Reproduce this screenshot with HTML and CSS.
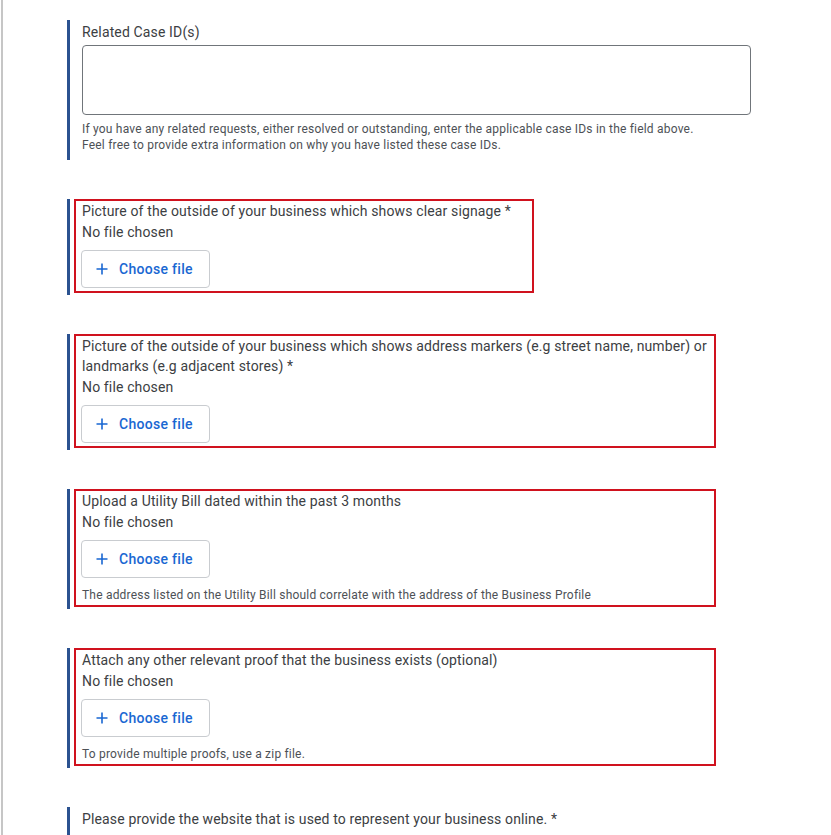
FILE: index.html
```html
<!DOCTYPE html>
<html>
  <head>
    <link rel="stylesheet" href="styles.css">
    <title>Business Verification - Upload Proof</title>
  </head>
  <body>
    <div class="page">
      <div class="form">
        <div class="question">
          <div class="q-body q-wide">
            <label class="q-title">Related Case ID(s)</label>
            <textarea class="q-textarea" rows="3"></textarea>
            <p class="q-help">
              If you have any related requests, either resolved or outstanding, enter the applicable case IDs in the field above.<br>
              Feel free to provide extra information on why you have listed these case IDs.
            </p>
          </div>
        </div>

        <div class="question">
          <div class="q-body mark mark-sm">
            <label class="q-title">Picture of the outside of your business which shows clear signage *</label>
            <div class="file-status">No file chosen</div>
            <button class="file-btn">
              <svg class="plus" viewBox="0 0 12 12"><path d="M6 0.5v11M0.5 6h11"/></svg>
              Choose file
            </button>
          </div>
        </div>

        <div class="question">
          <div class="q-body mark mark-lg">
            <label class="q-title">Picture of the outside of your business which shows address markers (e.g street name, number) or<br>landmarks (e.g adjacent stores) *</label>
            <div class="file-status">No file chosen</div>
            <button class="file-btn">
              <svg class="plus" viewBox="0 0 12 12"><path d="M6 0.5v11M0.5 6h11"/></svg>
              Choose file
            </button>
          </div>
        </div>

        <div class="question">
          <div class="q-body mark mark-lg">
            <label class="q-title">Upload a Utility Bill dated within the past 3 months</label>
            <div class="file-status">No file chosen</div>
            <button class="file-btn">
              <svg class="plus" viewBox="0 0 12 12"><path d="M6 0.5v11M0.5 6h11"/></svg>
              Choose file
            </button>
            <p class="q-help file-help">The address listed on the Utility Bill should correlate with the address of the Business Profile</p>
          </div>
        </div>

        <div class="question">
          <div class="q-body mark mark-lg">
            <label class="q-title">Attach any other relevant proof that the business exists (optional)</label>
            <div class="file-status">No file chosen</div>
            <button class="file-btn">
              <svg class="plus" viewBox="0 0 12 12"><path d="M6 0.5v11M0.5 6h11"/></svg>
              Choose file
            </button>
            <p class="q-help file-help">To provide multiple proofs, use a zip file.</p>
          </div>
        </div>

        <div class="question">
          <div class="q-body q-wide">
            <label class="q-title">Please provide the website that is used to represent your business online. *</label>
            <input class="q-input" type="text">
          </div>
        </div>
      </div>
    </div>
  </body>
</html>
```

FILE: styles.css
```css
body {
  margin: 0;
  background: #fff;
  font-family: Roboto, "Liberation Sans", sans-serif;
  color: #3c4043;
}

.page {
  margin-left: 1px;
  border-left: 2px solid #c6c6c6;
  min-height: 100vh;
  padding-top: 20px;
}

.form {
  display: flex;
  flex-direction: column;
  gap: 39px;
  margin-left: 64px;
}

.question {
  border-left: 3px solid #2b5290;
  padding-bottom: 2px;
}

.q-body {
  display: flex;
  flex-direction: column;
  align-items: flex-start;
  margin-left: 4px;
  border: 2px solid transparent;
  padding: 0 6px 3px 6px;
  box-sizing: border-box;
}

.q-wide {
  width: 685px;
}

.mark {
  border-color: #d0121e;
}

.mark-sm {
  width: 460px;
}

.mark-lg {
  width: 642px;
}

.q-title {
  font-size: 14px;
  line-height: 20px;
  letter-spacing: 0.14px;
  white-space: nowrap;
}

.q-textarea {
  margin-top: 3px;
  width: 669px;
  height: 70px;
  box-sizing: border-box;
  border: 1px solid #70757a;
  border-radius: 4px;
  resize: none;
  font-family: inherit;
}

.q-input {
  margin-top: 12px;
  width: 669px;
  height: 40px;
  box-sizing: border-box;
  border: 1px solid #70757a;
  border-radius: 4px;
}

.q-help {
  margin: 6px 0 0 0;
  font-size: 12px;
  line-height: 16px;
  letter-spacing: 0.2px;
  color: #4d5156;
}

.file-help {
  margin-top: 9px;
  margin-bottom: -1px;
}

.file-status {
  margin-top: 1px;
  font-size: 14px;
  line-height: 20px;
  letter-spacing: 0.14px;
}

.file-btn {
  margin-top: 8px;
  display: flex;
  align-items: center;
  gap: 11px;
  width: 129px;
  height: 38px;
  margin-left: -1px;
  padding: 0 0 0 14px;
  background: #fff;
  border: 1px solid #c9ccd0;
  border-radius: 4px;
  color: #1967d2;
  font-family: inherit;
  font-size: 14px;
  font-weight: 500;
  letter-spacing: 0.3px;
  cursor: pointer;
}

.plus {
  width: 12px;
  height: 12px;
  fill: none;
  stroke: #1967d2;
  stroke-width: 1.6;
}
```
